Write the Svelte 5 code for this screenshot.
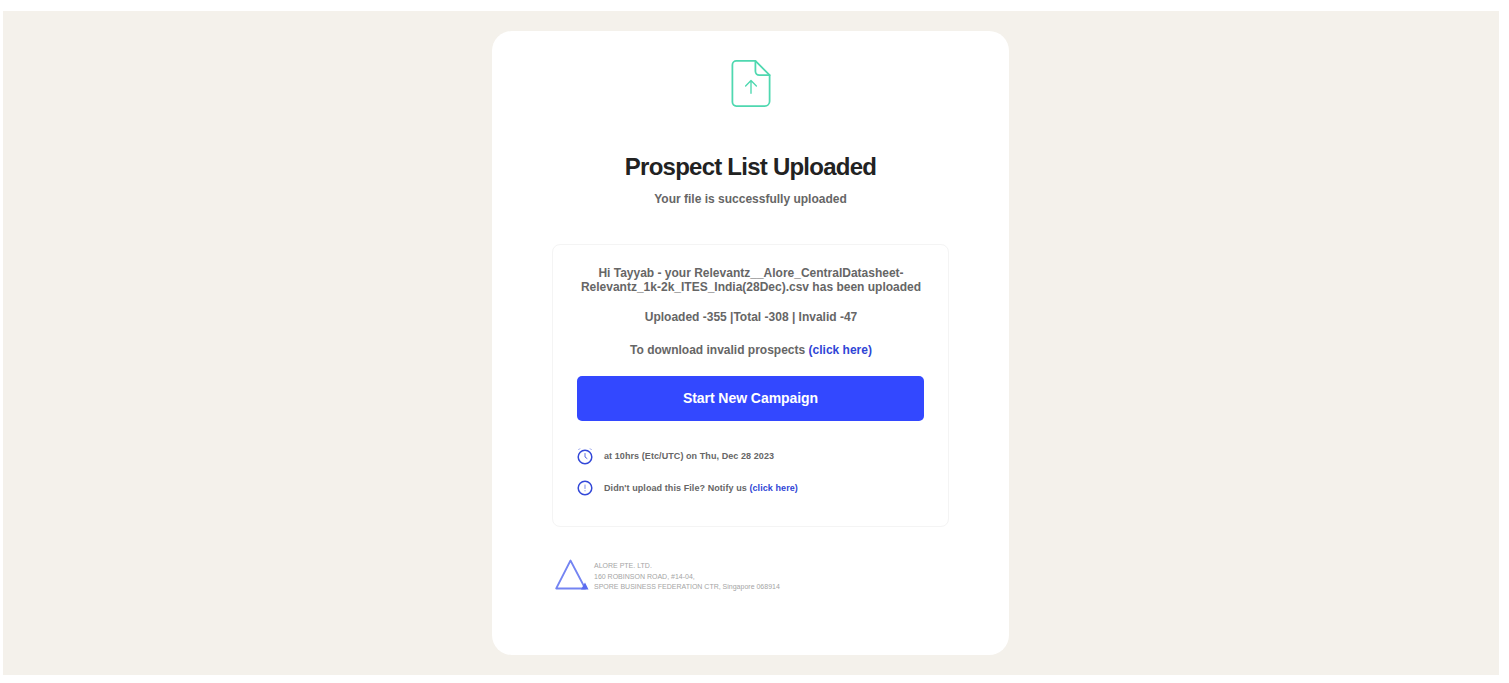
<script>
  const invalidLink = '(click here)';
</script>

<div class="page">
  <div class="backdrop">
    <main class="card">
      <svg class="file-icon" width="40" height="48" viewBox="0 0 40 48" fill="none" stroke="#4fd8b0" stroke-width="1.8" stroke-linecap="round" stroke-linejoin="round">
        <path d="M5 1h19.500L39 15.500V42a5 5 0 0 1-5 5H5a4 4 0 0 1-4-4V5a4 4 0 0 1 4-4z" />
        <path d="M24.500 1v10.500a4 4 0 0 0 4 4H39" />
        <path d="M20 34V21M14.500 26.500L20 21l5.500 5.500" stroke-width="1.400" />
      </svg>

      <h1>Prospect List Uploaded</h1>
      <p class="subtitle">Your file is successfully uploaded</p>

      <section class="details">
        <p class="filename">Hi Tayyab - your Relevantz__Alore_CentralDatasheet-<br />Relevantz_1k-2k_ITES_India(28Dec).csv has been uploaded</p>
        <p class="counts">Uploaded -355 |Total -308 | Invalid -47</p>
        <p class="download">To download invalid prospects <a href="#invalid">{invalidLink}</a></p>
        <button class="cta" type="button">Start New Campaign</button>

        <div class="meta-row first">
          <svg width="16" height="17" viewBox="0 0 16 17" fill="none" stroke="#3348d8" stroke-width="1.500" stroke-linecap="round">
            <circle cx="8" cy="9" r="6.800" />
            <path d="M8 5.500V9l2 1.500" stroke-width="0.800" />
            <path d="M1.500 1.500L3 .8M14.500 1.500L13 .8" stroke-width="0.700" opacity="0.6" />
          </svg>
          <span>at 10hrs (Etc/UTC) on Thu, Dec 28 2023</span>
        </div>
        <div class="meta-row">
          <svg width="16" height="16" viewBox="0 0 16 16" fill="none" stroke="#3348d8" stroke-width="1.500" stroke-linecap="round">
            <circle cx="8" cy="8" r="6.800" />
            <path d="M8 5v3.500M8 10.600v.3" stroke-width="0.900" opacity="0.7" />
          </svg>
          <span>Didn't upload this File? Notify us <a href="#notify">(click here)</a></span>
        </div>
      </section>

      <footer class="company">
        <svg width="34" height="32" viewBox="0 0 34 32" fill="none">
          <path d="M15.500 1.500L1.200 29.500h29z" stroke="#7484f2" stroke-width="1.800" stroke-linejoin="round" />
          <path d="M30 23.500l3.500 7h-7.500z" fill="#5a6cf0" />
        </svg>
        <address>
          ALORE PTE. LTD.<br />
          160 ROBINSON ROAD, #14-04,<br />
          SPORE BUSINESS FEDERATION CTR, Singapore 068914
        </address>
      </footer>
    </main>
  </div>
</div>

<style>
  :global(body) {
    background: #fff;
  }

  .page {
    height: 683px;
    padding: 11px 10px 8px 3px;
    box-sizing: border-box;
    font-family: "Liberation Sans", Arial, sans-serif;
  }

  .backdrop {
    height: 100%;
    background: #f4f1eb;
    padding-top: 20px;
    box-sizing: border-box;
  }

  .card {
    width: 517px;
    height: 624px;
    margin-left: 489px;
    box-sizing: border-box;
    padding-top: 29px;
    background: #fff;
    border-radius: 20px;
    display: flex;
    flex-direction: column;
    align-items: center;
  }

  .file-icon {
    display: block;
    margin-left: 1px;
    margin-bottom: 1px;
    height: 47px;
  }

  h1 {
    margin: 45px 0 0;
    font-size: 24px;
    line-height: 28px;
    font-weight: 700;
    letter-spacing: -0.76px;
    color: #222;
  }

  .subtitle {
    margin: 10px 0 0;
    font-size: 12px;
    line-height: 16px;
    font-weight: 700;
    color: #666;
  }

  .details {
    width: 397px;
    height: 283px;
    margin-top: 37px;
    box-sizing: border-box;
    padding: 21px 24px 0;
    border: 1px solid #f4f4f4;
    border-radius: 8px;
    text-align: center;
    font-size: 12px;
    line-height: 14px;
    font-weight: 700;
    color: #666;
  }

  .details p {
    margin: 0;
    padding-left: 1px;
  }

  .details .counts {
    margin-top: 16px;
  }

  .details .download {
    margin-top: 19px;
  }

  a {
    color: #2f45d6;
    text-decoration: none;
  }

  .cta {
    display: block;
    width: 100%;
    height: 45px;
    margin-top: 19px;
    border: none;
    border-radius: 5px;
    background: #3348ff;
    color: #fff;
    font: 700 14px "Liberation Sans", Arial, sans-serif;
    letter-spacing: -0.05px;
    padding-bottom: 3px;
  }

  .meta-row {
    display: flex;
    align-items: center;
    gap: 11px;
    height: 16px;
    margin-top: 16px;
    font-size: 9px;
    letter-spacing: 0.08px;
    text-align: left;
    color: #666;
  }

  .meta-row.first {
    margin-top: 27px;
  }

  .company {
    width: 397px;
    display: flex;
    align-items: center;
    gap: 5px;
    margin-top: 31px;
    padding-left: 3px;
    box-sizing: border-box;
  }

  address {
    font-style: normal;
    font-size: 7px;
    line-height: 10.500px;
    color: #a5a5a5;
    margin-top: 3px;
  }
</style>
